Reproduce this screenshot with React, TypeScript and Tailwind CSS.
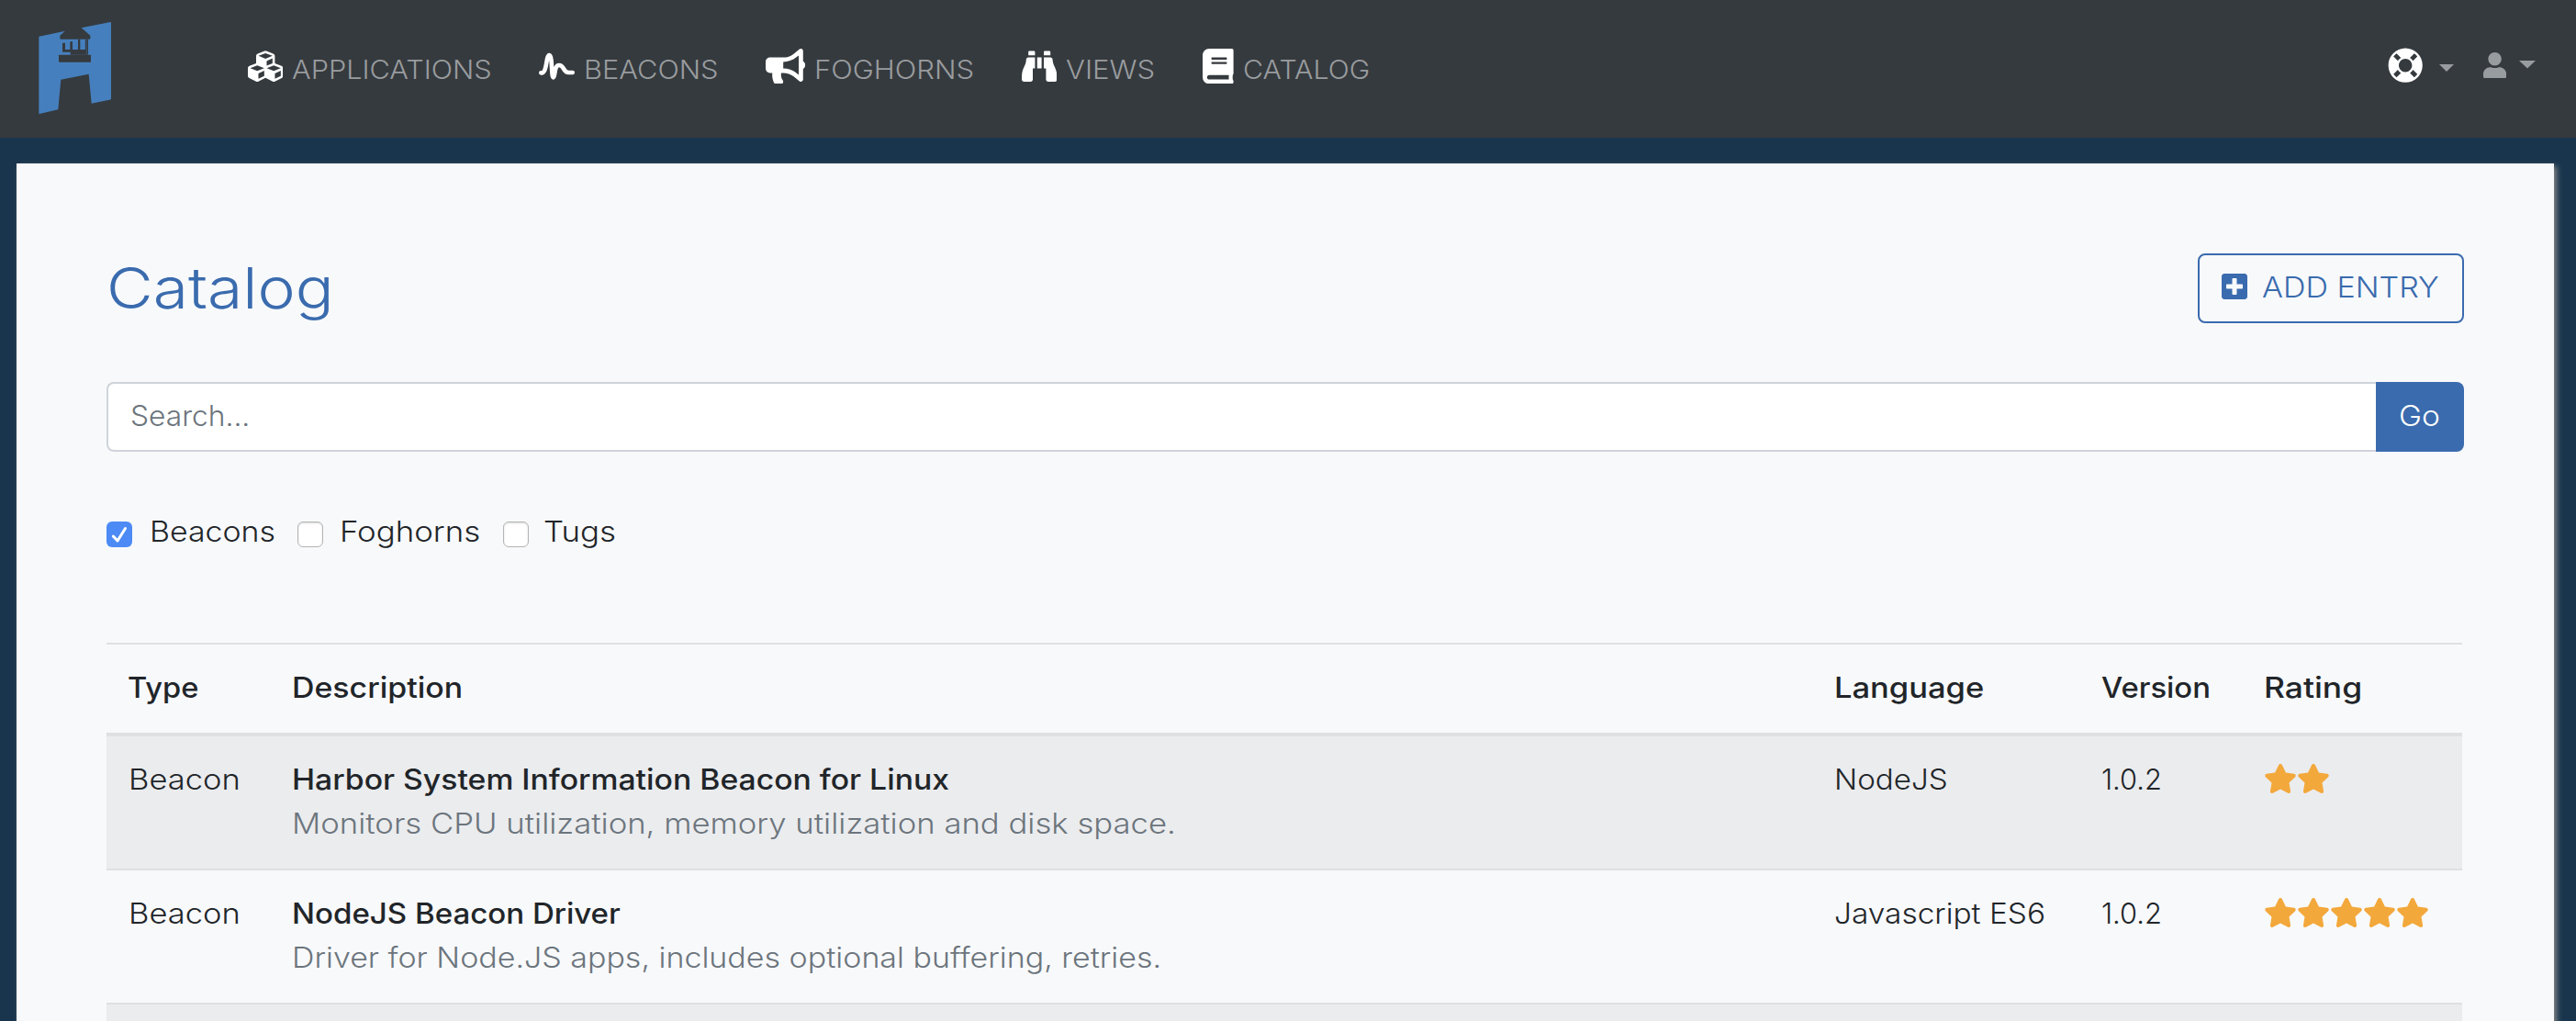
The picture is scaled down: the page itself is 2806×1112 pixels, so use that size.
import type { ReactNode } from "react";
import {
  FaBinoculars,
  FaBook,
  FaBullhorn,
  FaCubes,
  FaLifeRing,
  FaPlusSquare,
  FaStar,
  FaUser,
} from "react-icons/fa";

function Logo() {
  return (
    <svg viewBox="0 0 276 336" className="h-[112px] w-[92px]">
      <path
        fill="#467fbd"
        d="M20 65 105 47.500 88 62V71Q88 74 91 74H184Q187 74 187 71V62L158 37 253 18Q255 18 255 20V268Q255 271 253 271.500L191 284 182 188.500 91 206 82 304 21 318Q19 318 19 316V67Z"
      />
      <g fill="#353a3e">
        <path d="M84 127Q84 125 86 125H187Q189 125 189 127V147Q189 149 187 149H86Q84 149 84 147Z" />
        <path d="M96 88Q96 86 98 86H105V108H121V84Q121 82 123 82H129V108H147V74H154V108H170.500V74H180V125H122V116H96Z" />
      </g>
      <path fill="#467fbd" d="M173.500 74H177V124H173.500Z" opacity=".35" />
    </svg>
  );
}

function Wave() {
  return (
    <svg viewBox="0 0 117 117" className="h-[39px] w-[39px]" fill="none">
      <path
        d="M7 79H10C27 77 23 22 34 21C45 22 40 94 47 94C54 94 49 54 66 54C84 54 78 78 97 78H110"
        stroke="#fff"
        strokeWidth="14"
        strokeLinecap="round"
        strokeLinejoin="round"
      />
    </svg>
  );
}

function Caret({ className }: { className: string }) {
  return (
    <svg viewBox="0 0 18 9" preserveAspectRatio="none" className={className}>
      <path fill="#999c9f" d="M0 0H18L9 9Z" />
    </svg>
  );
}

/* Widened text: the stretch class sets the horizontal scale of the label. */
function Wide({ stretch, children }: { stretch: string; children: ReactNode }) {
  return <span className={`inline-block origin-left whitespace-nowrap ${stretch}`}>{children}</span>;
}

function NavItem({ icon, label, width, stretch }: { icon: ReactNode; label: string; width: string; stretch: string }) {
  return (
    <a className={`flex items-start gap-[10px] text-white ${width}`}>
      {icon}
      <span className="mt-[3px] text-[27.7px] leading-10 font-light text-[#999c9f]">
        <Wide stretch={stretch}>{label}</Wide>
      </span>
    </a>
  );
}

function Header() {
  return (
    <header className="flex h-[150px] items-start bg-[#353a3e]">
      <div className="mt-[18px] ml-9 w-[234px]">
        <Logo />
      </div>
      <nav className="flex pt-[52.500px]">
        <NavItem icon={<FaCubes className="h-[38.4px] w-[38.4px]" />} label="APPLICATIONS" width="w-[316.500px]" stretch="scale-x-[1.107]" />
        <NavItem icon={<Wave />} label="BEACONS" width="w-[247.500px]" stretch="scale-x-[1.11]" />
        <NavItem icon={<FaBullhorn className="h-[38.4px] w-[43.2px]" />} label="FOGHORNS" width="w-[279px]" stretch="scale-x-[1.12]" />
        <NavItem icon={<FaBinoculars className="h-[38.4px] w-[38.4px]" />} label="VIEWS" width="w-[197px]" stretch="scale-x-[1.12]" />
        <NavItem icon={<FaBook className="h-[38.4px] w-[33.6px]" />} label="CATALOG" width="w-[180px]" stretch="scale-x-[1.094]" />
      </nav>
      <div className="mt-[52px] mr-11 ml-auto flex items-start text-[#999c9f]">
        <FaLifeRing className="h-[38.4px] w-[38.4px] text-white" />
        <Caret className="mt-[18px] ml-[17.500px] h-2 w-4" />
        <FaUser className="mt-[4.600px] ml-8 h-[28.8px] w-[25.2px]" />
        <Caret className="mt-[14px] ml-[13.600px] h-[8.600px] w-[18px]" />
      </div>
    </header>
  );
}

function Checkbox({ checked }: { checked?: boolean }) {
  return checked ? (
    <span className="h-7 w-7 rounded-[6px] bg-[#4c8bf5]">
      <svg viewBox="0 0 28 28" className="h-7 w-7" fill="none">
        <path d="M7.300 16 12 21 20.500 7.500" stroke="#fff" strokeWidth="3" strokeLinecap="round" strokeLinejoin="round" />
      </svg>
    </span>
  ) : (
    <span className="h-7 w-7 rounded-[6px] border border-[#b4b4b4] bg-white shadow-[inset_0_1px_2px_rgba(0,0,0,0.15)]" />
  );
}

function Filter({ label, checked, width, stretch }: { label: string; checked?: boolean; width: string; stretch: string }) {
  return (
    <label className={`flex items-start ${width}`}>
      <span className="mt-[13px] flex">
        <Checkbox checked={checked} />
      </span>
      <span className="font-[350]">
        <Wide stretch={stretch}>{label}</Wide>
      </span>
    </label>
  );
}

const columns = "mr-0.5 grid grid-cols-[178px_1680px_291px_177px_238px] text-[30.8px] leading-[48px] *:pl-6";

interface RowProps {
  title: string;
  text: string;
  language: string;
  version: string;
  stars: number;
  tone: string;
  titleStretch: string;
  textStretch: string;
  languageStretch: string;
}

function Row({ title, text, language, version, stars, tone, titleStretch, textStretch, languageStretch }: RowProps) {
  return (
    <div className={`${columns} ${tone} pt-[23px] pb-[25px] font-light`}>
      <div>
        <Wide stretch="scale-x-[1.12]">Beacon</Wide>
      </div>
      <div>
        <div className="font-medium">
          <Wide stretch={titleStretch}>{title}</Wide>
        </div>
        <div className="text-[#6c757d]">
          <Wide stretch={textStretch}>{text}</Wide>
        </div>
      </div>
      <div>
        <Wide stretch={languageStretch}>{language}</Wide>
      </div>
      <div>{version}</div>
      <div className="flex pt-[7px] text-[#f3a83b]">
        {Array.from({ length: stars }, (_, i) => (
          <FaStar key={i} className="h-8 w-9" />
        ))}
      </div>
    </div>
  );
}

export default function App() {
  return (
    <div className="h-[1112px] w-[2806px] overflow-hidden bg-[#18354d] font-[Inter,sans-serif] text-[#212529]">
      <Header />
      <main className="mt-7 mr-6 ml-[18px] h-[1200px] bg-[#f8f9fb] px-[98px] pt-[98px] shadow-[3px_3px_6px_#888]">
        <div className="flex h-[76px] justify-between">
          <h1 className="text-[61.6px] leading-[76px] font-[350] text-[#3a6bae]">
            <Wide stretch="scale-x-[1.13]">Catalog</Wide>
          </h1>
          <button className="flex h-[76px] w-[290px] items-start rounded-lg border-2 border-[#3a6bae] pt-[11px] pl-6 text-[30.8px] leading-[48px] font-light text-[#3a6bae]">
            <FaPlusSquare className="mt-[7px] mr-4 h-8 w-7" />
            <Wide stretch="scale-x-[1.105]">ADD ENTRY</Wide>
          </button>
        </div>
        <div className="mt-16 flex h-[76px] text-[30.8px] leading-[48px]">
          <div className="grow rounded-l-lg border-2 border-r-0 border-[#ced4da] bg-white pt-[11px] pl-6 font-[350] text-[#6c757d]">
            <Wide stretch="scale-x-[1.03]">Search...</Wide>
          </div>
          <button className="flex w-24 items-start rounded-r-lg bg-[#3a6bae] pt-[13px] pl-[25px] font-light text-white">
            <Wide stretch="scale-x-[1.09]">Go</Wide>
          </button>
        </div>
        <div className="mt-[63px] flex h-[145px] text-[30.8px] leading-[48px]">
          <Filter label="Beacons" checked width="w-[208px] gap-[19px]" stretch="scale-x-[1.1]" />
          <Filter label="Foghorns" width="w-[224px] gap-[18px]" stretch="scale-x-[1.13]" />
          <Filter label="Tugs" width="w-[160px] gap-4" stretch="scale-x-[1.13]" />
        </div>
        <div className={`${columns} h-[102px] border-t-2 border-b-4 border-[#dee0e2] pt-[23px] font-medium`}>
          <div className="-ml-px">
            <Wide stretch="scale-x-[1.06]">Type</Wide>
          </div>
          <div>
            <Wide stretch="scale-x-[1.1]">Description</Wide>
          </div>
          <div>
            <Wide stretch="scale-x-[1.12]">Language</Wide>
          </div>
          <div>
            <Wide stretch="scale-x-[1.065]">Version</Wide>
          </div>
          <div>
            <Wide stretch="scale-x-[1.15]">Rating</Wide>
          </div>
        </div>
        <Row
          title="Harbor System Information Beacon for Linux"
          text="Monitors CPU utilization, memory utilization and disk space."
          language="NodeJS"
          version="1.0.2"
          stars={2}
          tone="h-36 bg-[#ebecee]"
          titleStretch="scale-x-[1.095]"
          textStretch="scale-x-[1.126]"
          languageStretch="scale-x-[1.075]"
        />
        <Row
          title="NodeJS Beacon Driver"
          text="Driver for Node.JS apps, includes optional buffering, retries."
          language="Javascript ES6"
          version="1.0.2"
          stars={5}
          tone="h-[148px] border-y-2 border-[#dee0e2]"
          titleStretch="scale-x-[1.073]"
          textStretch="scale-x-[1.103]"
          languageStretch="scale-x-[1.085]"
        />
        <div className="mr-0.5 h-36 bg-[#ebecee]" />
      </main>
    </div>
  );
}
